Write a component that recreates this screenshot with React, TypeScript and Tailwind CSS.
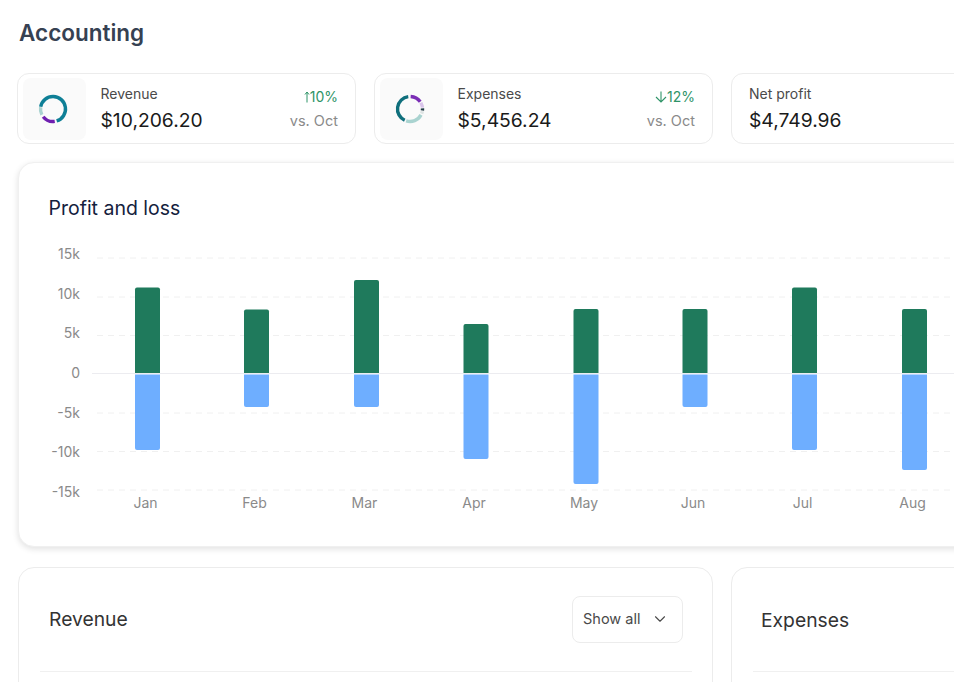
import { ChevronDown } from 'lucide-react';

const months = [
    { name: 'Jan', x: 135, top: 287.5, bottom: 450 },
    { name: 'Feb', x: 244, top: 309.5, bottom: 407 },
    { name: 'Mar', x: 354, top: 280, bottom: 407 },
    { name: 'Apr', x: 463.5, top: 324, bottom: 459 },
    { name: 'May', x: 573.5, top: 309, bottom: 484 },
    { name: 'Jun', x: 682.5, top: 309, bottom: 407 },
    { name: 'Jul', x: 792, top: 287.5, bottom: 450 },
    { name: 'Aug', x: 902, top: 309, bottom: 470 },
];

const ticks = [
    { label: '15k', y: 258, textY: 259 },
    { label: '10k', y: 297, textY: 298.5 },
    { label: '5k', y: 335.5, textY: 338 },
    { label: '0', y: 373.5, textY: 378 },
    { label: '-5k', y: 413, textY: 417.5 },
    { label: '-10k', y: 451.5, textY: 457 },
    { label: '-15k', y: 490, textY: 496.5 },
];

const font = 'font-["Inter","Liberation_Sans",sans-serif]';

function arc(start: number, end: number) {
    const r = 12.5;
    const point = (deg: number) => {
        const a = ((deg - 90) * Math.PI) / 180;
        return `${16 + r * Math.cos(a)} ${16 + r * Math.sin(a)}`;
    };
    const large = end - start > 180 ? 1 : 0;
    return `M${point(start)} A${r} ${r} 0 ${large} 1 ${point(end)}`;
}

function Donut({ segments }: { segments: { from: number; to: number; color: string }[] }) {
    return (
        <svg width="32" height="32" viewBox="0 0 32 32" fill="none">
            {segments.map((s) => (
                <path key={s.from} d={arc(s.from, s.to)} stroke={s.color} strokeWidth="3.4" />
            ))}
        </svg>
    );
}

function UpArrow() {
    return (
        <svg width="6" height="12" viewBox="0 0 6 12" fill="none" stroke="#2f9468" strokeWidth="1">
            <path d="M3 11.5V1M1 3.5L3 1l2 2.5" />
        </svg>
    );
}

function DownArrow() {
    return (
        <svg width="12" height="12" viewBox="0 0 12 12" fill="none" stroke="#2f9468" strokeWidth="1.1">
            <path d="M6 0.5V11M1 6l5 5 5-5" />
        </svg>
    );
}

function StatCard({
    label,
    value,
    donut,
    trend,
    arrow,
}: {
    label: string;
    value: string;
    donut?: React.ReactNode;
    trend?: string;
    arrow?: React.ReactNode;
}) {
    return (
        <div className="flex h-[71px] w-[339px] shrink-0 items-center rounded-xl border border-[#ececec] bg-white py-1 pl-[5px] pr-1">
            {donut ? (
                <div className="mr-[14.5px] flex h-[62px] w-[63px] items-center justify-center rounded-lg bg-[#fafafa] pr-[4px]">
                    {donut}
                </div>
            ) : (
                <div className="w-[12px]" />
            )}
            <div className="flex-1">
                <div className="text-[14px] leading-[18px] text-[#4a4a4a]">{label}</div>
                <div className="mt-[4px] text-[19.3px] leading-[26px] text-[#1a1a1a]">{value}</div>
            </div>
            {trend && (
                <div className="mr-[13px] flex flex-col items-end">
                    <div className="flex items-center text-[14px] leading-[20px] text-[#2f9468]">
                        {arrow}
                        {trend}
                    </div>
                    <div className="mt-[4px] text-[14.5px] leading-[20px] text-[#8a8a8a]">vs. Oct</div>
                </div>
            )}
        </div>
    );
}

function Chart() {
    return (
        <svg width="1050" height="285" viewBox="19 240 1050 285" className="block">
            {ticks.map((t) =>
                t.label === '0' ? (
                    <line key={t.label} x1="92" x2="1069" y1={t.y} y2={t.y} stroke="#ececf0" />
                ) : (
                    <line
                        key={t.label}
                        x1="97"
                        x2="1069"
                        y1={t.y}
                        y2={t.y}
                        stroke="#f0f0f0"
                        strokeDasharray="6 5"
                    />
                ),
            )}
            {ticks.map((t) => (
                <text key={t.label} x="80" y={t.textY} textAnchor="end" fontSize="14" fill="#8a8a8a">
                    {t.label}
                </text>
            ))}
            {months.map((m) => (
                <g key={m.name}>
                    <path
                        d={`M${m.x} 373 V${m.top + 2} q0 -2 2 -2 H${m.x + 23} q2 0 2 2 V373 Z`}
                        fill="#1f7a5c"
                    />
                    <path
                        d={`M${m.x} 374.5 V${m.bottom - 2} q0 2 2 2 H${m.x + 23} q2 0 2 -2 V374.5 Z`}
                        fill="#6eaeff"
                    />
                    <text x={m.x + 10.5} y="508" textAnchor="middle" fontSize="14" fill="#8a8a8a">
                        {m.name}
                    </text>
                </g>
            ))}
        </svg>
    );
}

export default function App() {
    return (
        <div className={`h-[682px] w-[954px] overflow-hidden bg-white pl-[17px] ${font}`}>
            <div className="w-[1100px]">
                <h1 className="pl-[2px] pt-[19px] text-[22.5px] font-semibold leading-[28px] text-[#364152]">
                    Accounting
                </h1>
                <div className="mt-[26px] flex gap-[18px]">
                    <StatCard
                        label="Revenue"
                        value="$10,206.20"
                        trend="10%"
                        arrow={<UpArrow />}
                        donut={
                            <Donut
                                segments={[
                                    { from: -80, to: 163, color: '#0e7f96' },
                                    { from: 172, to: 232, color: '#6f1fb0' },
                                    { from: 243, to: 278, color: '#a9d3d0' },
                                ]}
                            />
                        }
                    />
                    <StatCard
                        label="Expenses"
                        value="$5,456.24"
                        trend="12%"
                        arrow={<DownArrow />}
                        donut={
                            <Donut
                                segments={[
                                    { from: 205, to: 352, color: '#0f6f7c' },
                                    { from: 3, to: 55, color: '#7a2db5' },
                                    { from: 60, to: 84, color: '#d9c4ea' },
                                    { from: 87, to: 97, color: '#1f3a44' },
                                    { from: 100, to: 112, color: '#dde3e3' },
                                    { from: 118, to: 198, color: '#a9d3d0' },
                                ]}
                            />
                        }
                    />
                    <StatCard label="Net profit" value="$4,749.96" />
                </div>

                <div className="ml-px mt-[18px] h-[385px] w-[1060px] rounded-2xl border border-[#f0f0f0] bg-white shadow-[0_2px_6px_rgba(0,0,0,0.12)]">
                    <h2 className="pl-[29.5px] pt-[32px] text-[19.5px] leading-[26px] text-[#14213d]">Profit and loss</h2>
                    <div className="mt-[19px]">
                        <Chart />
                    </div>
                </div>

                <div className="ml-px mt-[20px] flex gap-[18px]">
                    <div className="h-[200px] w-[695px] rounded-2xl border border-[#ececec] bg-white pl-[21px] pr-[20px]">
                        <div className="flex h-[104px] items-center justify-between border-b border-[#f0f0f0] pb-[1px] pl-[9px] pr-[9px]">
                            <h2 className="text-[19.3px] leading-[26px] text-[#333333]">Revenue</h2>
                            <button className="flex h-[47px] w-[111px] items-center justify-between rounded-lg border border-[#ececec] pl-[10px] pr-[13px] text-[14.5px] text-[#4a4a4a]">
                                Show all
                                <ChevronDown size={18} strokeWidth={1.5} />
                            </button>
                        </div>
                    </div>
                    <div className="h-[200px] w-[340px] rounded-2xl border border-[#ececec] bg-white pl-[21px]">
                        <div className="flex h-[104px] items-center border-b border-[#f0f0f0] pl-[8px]">
                            <h2 className="text-[19.3px] leading-[26px] text-[#333333]">Expenses</h2>
                        </div>
                    </div>
                </div>
            </div>
        </div>
    );
}
